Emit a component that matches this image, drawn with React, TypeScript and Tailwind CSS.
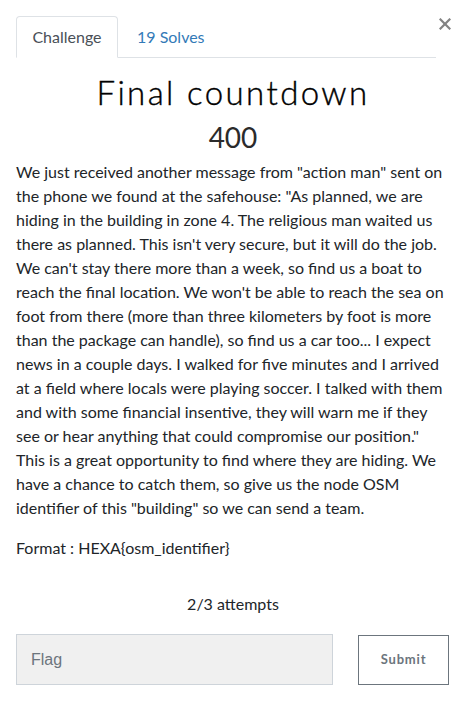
export default function App() {
  return (
    <div className="relative min-h-[717px] w-[466px] bg-white px-4 pt-4 font-['Lato',sans-serif] text-[#212529]">
      <button
        aria-label="Close"
        className="absolute right-[15px] top-[18px] text-[#838383]"
      >
        <svg width="12" height="12" viewBox="0 0 12 12" fill="none" stroke="currentColor" strokeWidth="2.2" strokeLinecap="square">
          <line x1="1.5" y1="1.5" x2="10.5" y2="10.5" />
          <line x1="10.5" y1="1.5" x2="1.5" y2="10.5" />
        </svg>
      </button>

      <div className="mr-[14px] flex border-b border-[#dee2e6]">
        <div className="-mb-px flex h-[42px] w-[102px] items-center justify-center rounded-t border border-b-white border-[#dee2e6] bg-white text-base text-[#495057]">
          Challenge
        </div>
        <div className="flex h-[41px] items-center px-[19px] text-base text-[#337ab7]">
          19 Solves
        </div>
      </div>

      <h1 className="mt-[14px] text-center font-['Lato',sans-serif] text-[33px] font-light leading-[40px] tracking-[2.4px] text-[#000] [-webkit-text-stroke:0.4px_#000]">
        Final countdown
      </h1>
      <div className="mt-[8px] text-center text-[28px] leading-[34px] text-[#2b2b2b]">400</div>

      <div className="mt-[6px] text-base leading-6 text-[#212529]">
        <p>
          We just received another message from "action man" sent on the phone we found at the safehouse: "As planned, we are hiding in the building in zone 4. The religious man waited us there as planned. This isn't very secure, but it will do the job. We can't stay there more than a week, so find us a boat to reach the final location. We won't be able to reach the sea on foot from there (more than three kilometers by foot is more than the package can handle), so find us a car too... I expect news in a couple days. I walked for five minutes and I arrived at a field where locals were playing soccer. I talked with them and with some financial insentive, they will warn me if they see or hear anything that could compromise our position." This is a great opportunity to find where they are hiding. We have a chance to catch them, so give us the node OSM identifier of this "building" so we can send a team.
        </p>
        <p className="mt-4">Format : HEXA{"{osm_identifier}"}</p>
      </div>

      <div className="mt-[32px] text-center text-base leading-6">2/3 attempts</div>

      <div className="mt-[18px] flex items-center">
        <input
          placeholder="Flag"
          className="h-[51px] w-[317px] border border-[#ced4da] bg-[#f0f0f0] px-[14px] font-['Liberation_Sans',sans-serif] text-base text-[#495057] placeholder:text-[#6c757d] outline-none"
        />
        <button className="ml-[25px] flex h-[50px] w-[91px] items-center justify-center border border-[#6c757d] bg-white text-[13px] font-bold tracking-[0.8px] text-[#6c757d]">
          Submit
        </button>
      </div>
    </div>
  );
}
